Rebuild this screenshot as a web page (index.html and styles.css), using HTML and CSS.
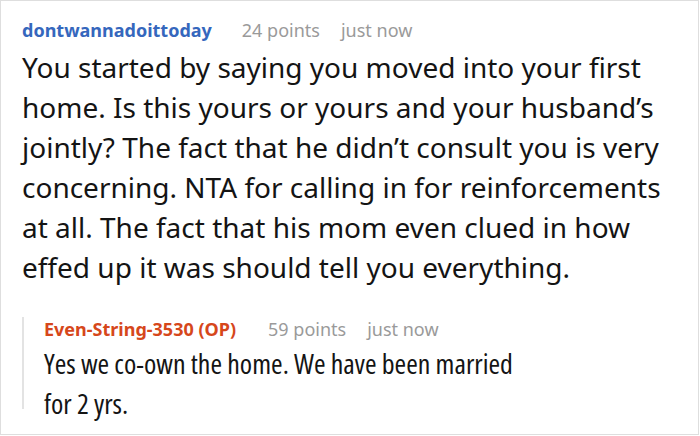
FILE: index.html
```html
<!DOCTYPE html>
<html>
<head>
<meta charset="utf-8">
<link rel="stylesheet" href="styles.css">
</head>
<body>
<div class="card">
  <div class="meta">
    <span class="author">dontwannadoittoday</span>
    <span class="points">24 points</span>
    <span class="time">just now</span>
  </div>
  <p class="text">You started by saying you moved into your first home. Is this yours or yours and your husband’s jointly? The fact that he didn’t consult you is very concerning. NTA for calling in for reinforcements at all. The fact that his mom even clued in how effed up it was should tell you everything.</p>
  <div class="reply">
    <div class="meta reply-meta">
      <span class="author op">Even-String-3530 (OP)</span>
      <span class="points">59 points</span>
      <span class="time">just now</span>
    </div>
    <p class="text reply-text">Yes we co-own the home. We have been married for 2 yrs.</p>
  </div>
</div>
</body>
</html>
```
FILE: styles.css
```css
html, body {
  margin: 0;
  padding: 0;
  background: #fff;
}
.card {
  box-sizing: border-box;
  width: 699px;
  height: 435px;
  border: 1px solid #dedede;
  padding: 17px 21px 0 21px;
  font-family: "Noto Sans", "Open Sans", sans-serif;
  color: #111;
}
.meta {
  display: flex;
  align-items: baseline;
  font-size: 18px;
  line-height: 24px;
  color: #9a9a9a;
}
.author {
  font-weight: 700;
  color: #3567bd;
  margin-right: 30px;
}
.points {
  margin-right: 21px;
}
.text {
  margin: 5px 0 0 0;
  font-size: 28px;
  line-height: 40px;
  color: #141414;
}
.reply {
  box-sizing: border-box;
  margin-top: 39px;
  height: 92px;
  border-left: 2px solid #e3e3e3;
  padding-left: 20px;
  width: 520px;
}
.reply-meta {
  margin-top: -9px;
}
.op {
  color: #d6471b;
}
.reply-meta .author {
  margin-right: 32px;
}
.reply-text {
  margin-top: 2px;
  font-family: "Open Sans", sans-serif;
  font-stretch: 87.5%;
}
```
